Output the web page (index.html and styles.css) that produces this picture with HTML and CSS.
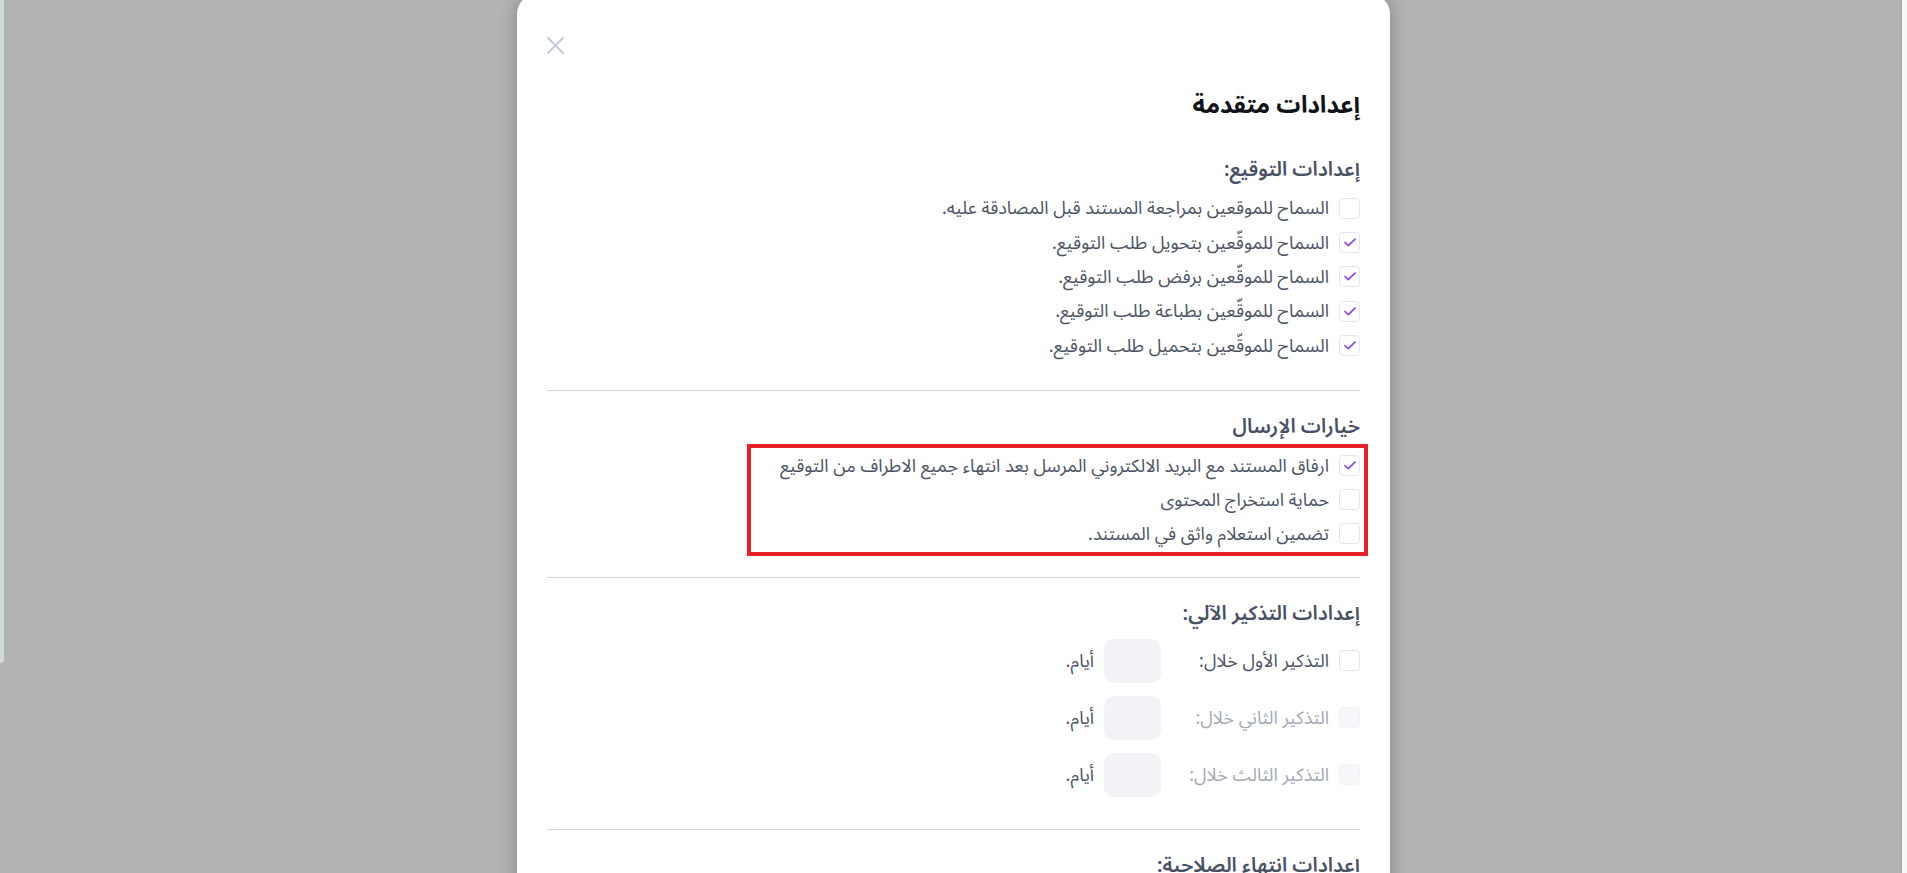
FILE: index.html
```html
<!DOCTYPE html>
<html lang="ar" dir="rtl">
<head>
<meta charset="utf-8">
<title>إعدادات متقدمة</title>
<link rel="stylesheet" href="styles.css">
</head>
<body>
<div class="bg-strip-left"></div>
<div class="bg-strip-right"></div>
<div class="overlay">
  <div class="modal">
    <div class="modal-top">
      <button class="close" aria-label="إغلاق">
        <svg width="17" height="17" viewBox="0 0 17 17"><path d="M1 1 L16 16 M16 1 L1 16" stroke="#c3cad7" stroke-width="1.8" stroke-linecap="round" fill="none"/></svg>
      </button>
    </div>
    <h1 class="title">إعدادات متقدمة</h1>

    <section class="section first">
      <h2 class="sec-head">إعدادات التوقيع:</h2>
      <div class="rows">
        <label class="row"><span class="box"></span><span class="txt">السماح للموقعين بمراجعة المستند قبل المصادقة عليه.</span></label>
        <label class="row"><span class="box"><svg width="12" height="9" viewBox="0 0 12 9"><path d="M1 4.5 L4.3 7.6 L11 1.2" stroke="#8b46e8" stroke-width="1.7" fill="none" stroke-linecap="round" stroke-linejoin="round"/></svg></span><span class="txt">السماح للموقّعين بتحويل طلب التوقيع.</span></label>
        <label class="row"><span class="box"><svg width="12" height="9" viewBox="0 0 12 9"><path d="M1 4.5 L4.3 7.6 L11 1.2" stroke="#8b46e8" stroke-width="1.7" fill="none" stroke-linecap="round" stroke-linejoin="round"/></svg></span><span class="txt">السماح للموقّعين برفض طلب التوقيع.</span></label>
        <label class="row"><span class="box"><svg width="12" height="9" viewBox="0 0 12 9"><path d="M1 4.5 L4.3 7.6 L11 1.2" stroke="#8b46e8" stroke-width="1.7" fill="none" stroke-linecap="round" stroke-linejoin="round"/></svg></span><span class="txt">السماح للموقّعين بطباعة طلب التوقيع.</span></label>
        <label class="row"><span class="box"><svg width="12" height="9" viewBox="0 0 12 9"><path d="M1 4.5 L4.3 7.6 L11 1.2" stroke="#8b46e8" stroke-width="1.7" fill="none" stroke-linecap="round" stroke-linejoin="round"/></svg></span><span class="txt">السماح للموقّعين بتحميل طلب التوقيع.</span></label>
      </div>
    </section>

    <section class="section">
      <h2 class="sec-head">خيارات الإرسال</h2>
      <div class="highlight">
        <label class="row"><span class="box"><svg width="12" height="9" viewBox="0 0 12 9"><path d="M1 4.5 L4.3 7.6 L11 1.2" stroke="#8b46e8" stroke-width="1.7" fill="none" stroke-linecap="round" stroke-linejoin="round"/></svg></span><span class="txt">ارفاق المستند مع البريد الالكتروني المرسل بعد انتهاء جميع الاطراف من التوقيع</span></label>
        <label class="row"><span class="box"></span><span class="txt">حماية استخراج المحتوى</span></label>
        <label class="row"><span class="box"></span><span class="txt">تضمين استعلام واثق في المستند.</span></label>
      </div>
    </section>

    <section class="section">
      <h2 class="sec-head">إعدادات التذكير الآلي:</h2>
      <div class="reminders">
        <div class="rem-row"><span class="box"></span><span class="rem-label">التذكير الأول خلال:</span><span class="num"></span><span class="days">أيام.</span></div>
        <div class="rem-row disabled"><span class="box"></span><span class="rem-label">التذكير الثاني خلال:</span><span class="num"></span><span class="days">أيام.</span></div>
        <div class="rem-row disabled"><span class="box"></span><span class="rem-label">التذكير الثالث خلال:</span><span class="num"></span><span class="days">أيام.</span></div>
      </div>
    </section>

    <section class="section">
      <h2 class="sec-head">إعدادات انتهاء الصلاحية:</h2>
    </section>
  </div>
</div>
</body>
</html>
```
FILE: styles.css
```css
* { box-sizing: border-box; }
html, body { margin: 0; padding: 0; }
body {
  width: 1907px;
  height: 873px;
  overflow: hidden;
  background: #b3b3b3;
  font-family: "Noto Sans Arabic", "Noto Sans", "DejaVu Sans", sans-serif;
  color: #4b5363;
}
.bg-strip-left {
  position: fixed;
  left: 0; top: 0;
  width: 4px; height: 663px;
  background: #d0d9dd;
  border-bottom-right-radius: 4px;
}
.bg-strip-right {
  position: fixed;
  right: 0; top: 0;
  width: 5px; height: 873px;
  background: #f7f7f7;
  box-shadow: -1px 0 2px rgba(0,0,0,0.12);
}
.overlay {
  display: flex;
  justify-content: center;
}
.modal {
  width: 873px;
  margin-top: -6px;
  background: #fff;
  border-radius: 20px;
  box-shadow: 0 0 18px rgba(0,0,0,0.28);
  padding: 43px 30px 40px 30px;
  display: flex;
  flex-direction: column;
}
.modal-top {
  display: flex;
  justify-content: flex-end;
  height: 17px;
}
.close {
  width: 17px; height: 17px;
  padding: 0; border: 0; background: none;
  display: block;
}
.close svg { display: block; }
.title {
  margin: 36px 0 0 0;
  font-size: 24px;
  line-height: 32px;
  font-weight: 700;
  color: #111318;
}
.section {
  border-top: 1px solid #cfd6e1;
  padding-top: 22px;
}
.section.first {
  border-top: 0;
  padding-top: 34px;
  padding-bottom: 27px;
}
.sec-head {
  margin: 0;
  font-size: 20px;
  line-height: 28px;
  font-weight: 600;
  color: #475065;
}
.rows { margin-top: 7px; }
.row {
  display: flex;
  align-items: center;
  height: 34.4px;
  gap: 10px;
}
.box {
  width: 21px; height: 21px;
  flex: none;
  border: 1px solid #e4e6ef;
  border-radius: 4px;
  background: #fff;
  display: flex;
  align-items: center;
  justify-content: center;
}
.box svg { display: block; }
.txt {
  font-size: 18px;
  line-height: 24px;
  color: #4b5363;
  white-space: nowrap;
}
.highlight {
  width: 621px;
  margin: 3px -8px 0 auto;
  border: 4px solid #e5222a;
  padding: 1px 4px 1px 0;
}
.highlight .row { height: 34px; }
.section:nth-of-type(2) { padding-bottom: 21px; }
.reminders {
  margin-top: 11px;
  display: flex;
  flex-direction: column;
  gap: 13px;
  padding-bottom: 32px;
}
.rem-row {
  display: flex;
  align-items: center;
  height: 44px;
}
.rem-label {
  width: 158px;
  margin: 0 10px 0 10px;
  font-size: 18px;
  line-height: 24px;
  color: #4b5363;
  white-space: nowrap;
}
.num {
  width: 57px; height: 44px;
  background: #f1f3f7;
  border-radius: 10px;
  flex: none;
}
.days {
  margin-right: 10px;
  font-size: 18px;
  line-height: 24px;
  color: #4b5363;
}
.rem-row.disabled .box {
  background: #f6f7f9;
  border-color: #f1f2f5;
}
.rem-row.disabled .rem-label { color: #a3a9b5; }
```
